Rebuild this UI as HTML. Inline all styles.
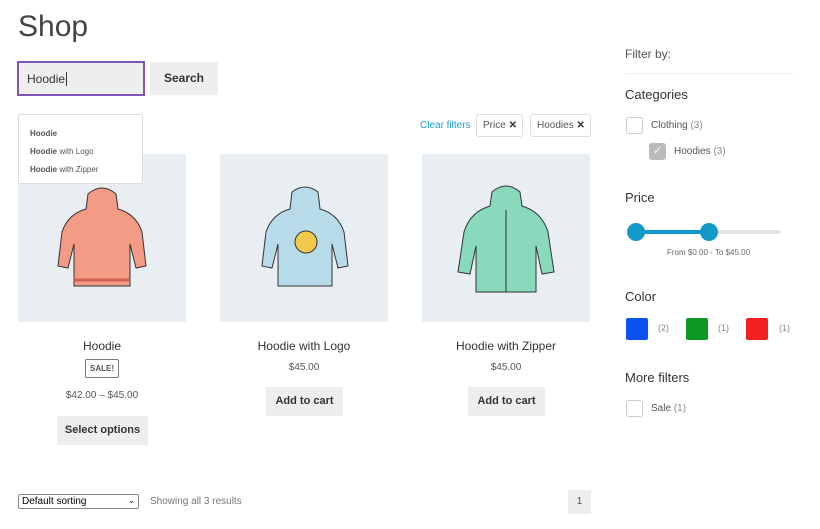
<!DOCTYPE html>
<html><head><meta charset="utf-8"><style>
*{margin:0;padding:0;box-sizing:border-box}
body{width:820px;height:529px;background:#fff;font-family:"Liberation Sans",sans-serif;color:#333;position:relative;overflow:hidden}
.a{position:absolute;white-space:nowrap}
.btn{background:#eee;color:#333;font-weight:bold;font-size:11px;text-align:center}
.img{background:#e9eef2;width:168px;height:168px;top:154px;border-radius:2px}
.t{font-size:12px;text-align:center;width:168px}
.p{font-size:10px;color:#555;text-align:center;width:168px}
.cb{width:17px;height:17px;border:1px solid #ccc;border-radius:3px;background:#fff}
.h{font-size:13px;color:#333}
.g{color:#888}
</style></head><body>
<div class="a" style="left:18px;top:10px;font-size:30px;color:#444">Shop</div>
<div class="a" style="left:17px;top:61px;width:128px;height:35px;border:2px solid #7f54b3;background:#eee;font-size:12px;padding:9px 8px">Hoodie<span style="border-left:1px solid #333;margin-left:1px"></span></div>
<div class="a btn" style="left:150px;top:62px;width:68px;height:33px;line-height:33px;font-size:12px">Search</div>
<div class="a" style="left:18px;top:114px;width:125px;height:70px;border:1px solid #ddd;border-radius:2px;background:#fff;font-size:8px;color:#555;padding:10px 11px;line-height:18px;z-index:2">
<b>Hoodie</b><br><b>Hoodie</b> with Logo<br><b>Hoodie</b> with Zipper</div>
<div class="a" style="left:420px;top:120px;font-size:10px;color:#1e9cd1">Clear filters</div>
<div class="a" style="left:476px;top:114px;width:47px;height:23px;border:1px solid #ddd;border-radius:3px;font-size:10px;padding:5px 6px;color:#555">Price <b style="color:#333">✕</b></div>
<div class="a" style="left:530px;top:114px;width:61px;height:23px;border:1px solid #ddd;border-radius:3px;font-size:10px;padding:5px 6px;color:#555">Hoodies <b style="color:#333">✕</b></div>

<div class="a img" style="left:18px"><svg width="168" height="168" viewBox="0 0 168 168"><path d="M70 40 Q84 28 98 40 L100 55 Q118 60 124 78 L128 112 L118 114 L112 90 L112 132 L56 132 L56 90 L50 114 L40 112 L44 78 Q50 60 68 55Z" fill="#f39b85" stroke="#333" stroke-width="1"/><path d="M56 126 L112 126" stroke="#d06050" stroke-width="3"/></svg></div>
<div class="a img" style="left:220px"><svg width="168" height="168" viewBox="0 0 168 168"><path d="M72 38 Q85 28 98 38 L100 55 Q118 60 124 78 L128 112 L118 114 L112 90 L112 132 L58 132 L58 90 L52 114 L42 112 L46 78 Q52 60 70 55Z" fill="#b7dbe8" stroke="#333" stroke-width="1"/><circle cx="86" cy="88" r="11" fill="#f2c94c" stroke="#333" stroke-width="1"/></svg></div>
<div class="a img" style="left:422px"><svg width="168" height="168" viewBox="0 0 168 168"><path d="M70 38 Q84 26 98 38 L100 52 Q120 58 126 78 L132 118 L120 120 L114 92 L114 138 L54 138 L54 92 L48 120 L36 118 L42 78 Q48 58 68 52Z" fill="#8ad9bd" stroke="#333" stroke-width="1"/><path d="M84 56 L84 138" stroke="#333" stroke-width="1"/></svg></div>

<div class="a t" style="left:18px;top:339px">Hoodie</div>
<div class="a" style="left:85px;top:359px;width:34px;height:19px;border:1px solid #777;border-radius:2px;font-size:8px;font-weight:bold;text-align:center;line-height:17px;color:#555">SALE!</div>
<div class="a p" style="left:18px;top:390px">$42.00 – $45.00</div>
<div class="a btn" style="left:57px;top:416px;width:91px;height:29px;line-height:29px">Select options</div>
<div class="a t" style="left:220px;top:339px">Hoodie with Logo</div>
<div class="a p" style="left:220px;top:362px">$45.00</div>
<div class="a btn" style="left:266px;top:387px;width:77px;height:29px;line-height:29px">Add to cart</div>
<div class="a t" style="left:422px;top:339px">Hoodie with Zipper</div>
<div class="a p" style="left:422px;top:362px">$45.00</div>
<div class="a btn" style="left:468px;top:387px;width:77px;height:29px;line-height:29px">Add to cart</div>

<div class="a" style="left:18px;top:494px;width:121px;height:15px;border:1px solid #888;border-radius:2px;font-size:10px;padding:1px 3px;color:#000">Default sorting<span style="float:right;font-size:8px">⌄</span></div>
<div class="a" style="left:150px;top:496px;font-size:10px;color:#777">Showing all 3 results</div>
<div class="a" style="left:568px;top:490px;width:23px;height:24px;background:#eee;font-size:10px;text-align:center;line-height:24px;color:#555">1</div>

<div class="a" style="left:625px;top:47px;font-size:12px;color:#555">Filter by:</div>
<div class="a" style="left:625px;top:73px;width:168px;border-top:1px solid #eee"></div>
<div class="a h" style="left:625px;top:87px">Categories</div>
<div class="a cb" style="left:626px;top:117px"></div>
<div class="a" style="left:651px;top:120px;font-size:10px;color:#555">Clothing <span class="g">(3)</span></div>
<div class="a cb" style="left:649px;top:143px;background:#bbb;border-color:#bbb;color:#fff;font-size:11px;text-align:center;line-height:15px">✓</div>
<div class="a" style="left:674px;top:146px;font-size:10px;color:#555">Hoodies <span class="g">(3)</span></div>
<div class="a h" style="left:625px;top:190px">Price</div>
<div class="a" style="left:636px;top:230px;width:145px;height:4px;background:#e3e3e3;border-radius:2px"></div>
<div class="a" style="left:636px;top:230px;width:72px;height:4px;background:#1599c9"></div>
<div class="a" style="left:627px;top:223px;width:18px;height:18px;border-radius:50%;background:#1599c9"></div>
<div class="a" style="left:700px;top:223px;width:18px;height:18px;border-radius:50%;background:#1599c9"></div>
<div class="a" style="left:667px;top:248px;font-size:8px;color:#666">From $0.00 - To $45.00</div>
<div class="a h" style="left:625px;top:289px">Color</div>
<div class="a" style="left:626px;top:318px;width:22px;height:22px;background:#0b52f2;border-radius:2px"></div>
<div class="a g" style="left:658px;top:323px;font-size:9px">(2)</div>
<div class="a" style="left:686px;top:318px;width:22px;height:22px;background:#0d9a22;border-radius:2px"></div>
<div class="a g" style="left:718px;top:323px;font-size:9px">(1)</div>
<div class="a" style="left:746px;top:318px;width:22px;height:22px;background:#f32020;border-radius:2px"></div>
<div class="a g" style="left:779px;top:323px;font-size:9px">(1)</div>
<div class="a h" style="left:625px;top:370px">More filters</div>
<div class="a cb" style="left:626px;top:400px"></div>
<div class="a" style="left:651px;top:403px;font-size:10px;color:#555">Sale <span class="g">(1)</span></div>
</body></html>
